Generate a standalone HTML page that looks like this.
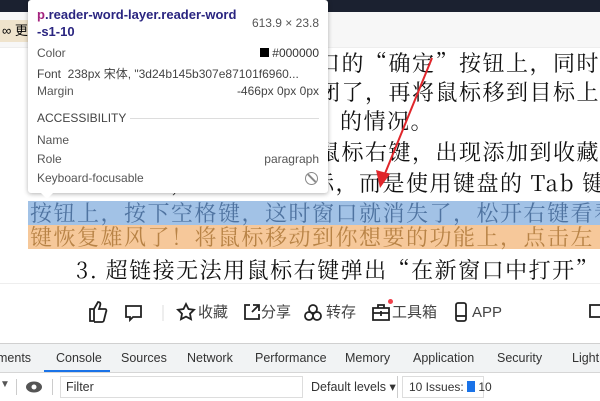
<!DOCTYPE html>
<html><head><meta charset="utf-8"><style>
*{margin:0;padding:0;box-sizing:border-box}
body{width:600px;height:400px;overflow:hidden;position:relative;background:#fff;font-family:"Liberation Sans","Noto Sans CJK SC",sans-serif}
.top{position:absolute;left:0;top:0;width:600px;height:12px;background:#1b2130}
.strip{position:absolute;left:0;top:12px;width:600px;height:36px;background:#f7f7f7;border-bottom:1px solid #eee}
.tag{position:absolute;left:0;top:20px;width:30px;height:22px;background:#efe3cc;font-size:13px;line-height:22px;padding-left:2px;white-space:nowrap;overflow:hidden}
.ln{position:absolute;white-space:nowrap;font-family:"Noto Serif CJK SC","Liberation Serif",serif;font-size:22px;letter-spacing:1.5px;color:#111;line-height:24px}
.hl{position:absolute;left:28px;width:572px;height:24px}
.tb{position:absolute;top:298px;font-size:15px;color:#444;height:30px;line-height:30px;white-space:nowrap}
.dev{position:absolute;left:0;top:343px;width:600px;height:57px;border-top:1px solid #d0d0d0;background:#fff}
.tabs{position:absolute;left:0;top:0;width:600px;height:29px;background:#f1f3f4;border-bottom:1px solid #d6d6d6;font-size:12.5px;color:#333;overflow:hidden}
.tabs span{position:absolute;top:7px;white-space:nowrap}
.tip{position:absolute;left:28px;top:0;width:300px;height:193px;background:#fff;border-radius:3px;box-shadow:0 1px 5px rgba(0,0,0,.3);font-size:12px;color:#555}
.tip div{position:absolute;white-space:nowrap}
</style></head><body>
<div class="top"></div>
<div class="strip"></div>
<div class="tag">∞ 更</div>

<div class="hl" style="top:201px;background:#a2c2e6"></div>
<div class="hl" style="top:225px;background:#f6c89a"></div>

<div class="ln" style="left:318px;top:51px">口的“确定”按钮上，同时</div>
<div class="ln" style="left:318px;top:80px">闭了，再将鼠标移到目标上</div>
<div class="ln" style="left:340px;top:109px">的情况。</div>
<div class="ln" style="left:318px;top:140px">鼠标右键，出现添加到收藏</div>
<div class="ln" style="left:30px;top:171px">不要移动鼠标，不要点击鼠标，而是使用键盘的 Tab 键</div>
<div class="ln" style="left:30px;top:201px;color:#4f73a0">按钮上，按下空格键，这时窗口就消失了，松开右键看看</div>
<div class="ln" style="left:30px;top:225px;color:#b88346">键恢复雄风了！将鼠标移动到你想要的功能上，点击左</div>
<div class="ln" style="left:76px;top:258px">3. 超链接无法用鼠标右键弹出“在新窗口中打开”</div>

<svg style="position:absolute;left:0;top:0" width="600" height="400">
<line x1="432" y1="58" x2="384" y2="176" stroke="#e0262b" stroke-width="2"/>
<polygon points="380,188 376,170 390,174" fill="#e0262b"/>
</svg>

<div style="position:absolute;left:0;top:283px;width:600px;height:1px;background:#eee"></div>
<svg style="position:absolute;left:0;top:296px" width="600" height="34" fill="none" stroke="#222" stroke-width="1.8">
<path d="M90 13h4v12h-4zM94 13l4-7c2 0 3 1 2 4l-1 3h6c1 0 2 1 1 3l-2 8c0 1-1 2-2 2h-8"/>
<path d="M126 10h15v11h-8l-3 3v-3h-4z"/>
<line x1="163" y1="9" x2="163" y2="25" stroke="#ddd" stroke-width="1"/>
<path d="M186 8l2.5 5 5.5 .8-4 3.9 1 5.5-5-2.6-5 2.6 1-5.5-4-3.9 5.5-.8z"/>
<path d="M250 9h-5v14h14v-5M253 9h6v6M259 9l-7 7"/>
<circle cx="309" cy="20" r="4"/><circle cx="317" cy="20" r="4"/><circle cx="313" cy="13" r="4"/>
<path d="M373 12h16v12h-16zM378 12v-3h6v3M373 17h16M381 15v5"/>
<rect x="456" y="7" width="10" height="18" rx="2"/><line x1="456" y1="20" x2="466" y2="20"/>
<rect x="590" y="9" width="12" height="12"/>
</svg>
<div style="position:absolute;left:388px;top:299px;width:5px;height:5px;border-radius:50%;background:#f0404a"></div>
<div class="tb" style="left:198px">收藏</div>
<div class="tb" style="left:261px">分享</div>
<div class="tb" style="left:326px">转存</div>
<div class="tb" style="left:392px">工具箱</div>
<div class="tb" style="left:472px">APP</div>

<div class="dev">
<div class="tabs">
<span style="left:-3px">ments</span>
<span style="left:56px">Console</span>
<span style="left:121px">Sources</span>
<span style="left:187px">Network</span>
<span style="left:255px">Performance</span>
<span style="left:345px">Memory</span>
<span style="left:413px">Application</span>
<span style="left:497px">Security</span>
<span style="left:572px">Lighthouse</span>
<div style="position:absolute;left:44px;top:26px;width:66px;height:2px;background:#1a73e8"></div>
</div>
<div style="position:absolute;left:0;top:30px;width:600px;height:27px;font-size:12.5px;color:#333">
<span style="position:absolute;left:0;top:5px;font-size:10px;color:#555">▼</span>
<div style="position:absolute;left:16px;top:5px;width:1px;height:16px;background:#ccc"></div>
<svg style="position:absolute;left:25px;top:6px" width="18" height="14"><ellipse cx="9" cy="7" rx="8" ry="5.5" fill="#555"/><circle cx="9" cy="7" r="2.5" fill="#fff"/></svg>
<div style="position:absolute;left:52px;top:5px;width:1px;height:16px;background:#ccc"></div>
<div style="position:absolute;left:60px;top:2px;width:243px;height:22px;border:1px solid #ddd;background:#fff;padding:3px 5px">Filter</div>
<span style="position:absolute;left:311px;top:5px;white-space:nowrap">Default levels ▾</span>
<div style="position:absolute;left:397px;top:2px;width:1px;height:22px;background:#ccc"></div>
<div style="position:absolute;left:402px;top:2px;width:82px;height:22px;border:1px solid #ddd;padding:3px 6px;white-space:nowrap;font-size:12px">10 Issues: <span style="display:inline-block;width:8px;height:11px;background:#1a73e8;vertical-align:-1px"></span> 10</div>
</div>
</div>

<div class="tip">
<div style="left:9px;top:6px;font-size:13px;font-weight:bold;color:#2a2580;line-height:17px"><span style="color:#a4247f">p</span>.reader-word-layer.reader-word<br>-s1-10</div>
<div style="right:9px;top:16px">613.9 × 23.8</div>
<div style="left:9px;top:46px">Color</div>
<div style="right:9px;top:46px;color:#333"><span style="display:inline-block;width:9px;height:9px;background:#000"></span> #000000</div>
<div style="left:9px;top:65px;color:#444">Font&nbsp;&nbsp;238px 宋体, "3d24b145b307e87101f6960...</div>
<div style="left:9px;top:84px">Margin</div>
<div style="right:9px;top:84px;color:#444">-466px 0px 0px</div>
<div style="left:9px;top:111px;color:#444">ACCESSIBILITY</div>
<div style="left:102px;top:118px;width:189px;height:1px;background:#ddd"></div>
<div style="left:9px;top:133px">Name</div>
<div style="left:9px;top:152px">Role</div>
<div style="right:9px;top:152px">paragraph</div>
<div style="left:9px;top:171px">Keyboard-focusable</div>
<div style="right:10px;top:172px;width:13px;height:13px;border:1.5px solid #888;border-radius:50%;overflow:hidden"><div style="left:4.5px;top:-2px;width:1.5px;height:15px;background:#888;transform:rotate(-45deg)"></div></div>
</div>
<div style="position:absolute;left:40px;top:192px;width:0;height:0;border-left:7px solid transparent;border-right:7px solid transparent;border-top:7px solid #fff"></div>
</body></html>
